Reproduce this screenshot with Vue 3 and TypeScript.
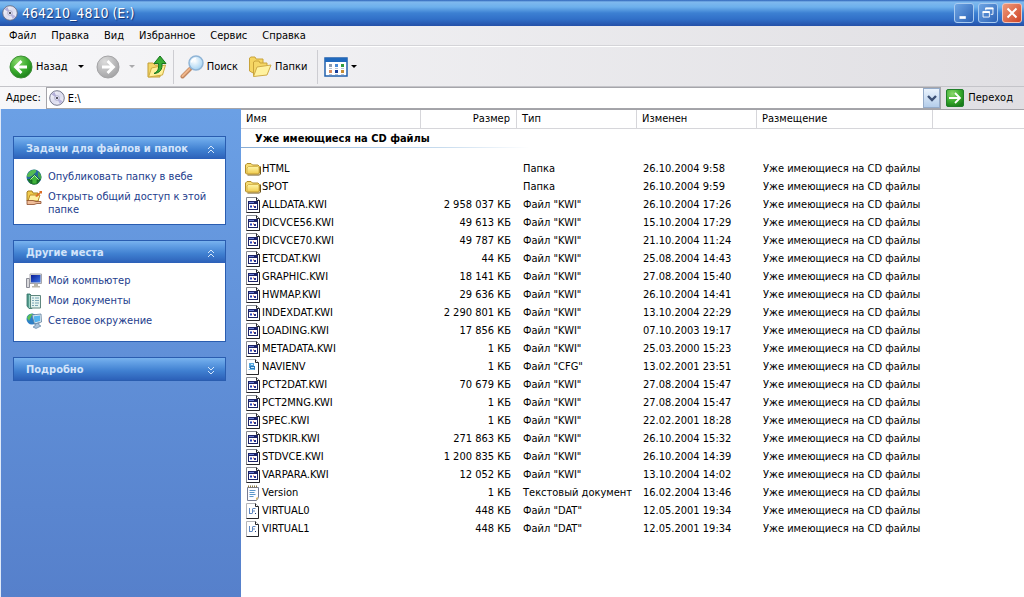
<script setup lang="ts">
import { ref } from 'vue'

type Icon = 'folder' | 'kwi' | 'cfg' | 'txt' | 'dat'

interface Entry {
  icon: Icon
  name: string
  size: string
  type: string
  modified: string
}

interface Place {
  icon: string
  label: string
}

interface Panel {
  id: string
  title: string
  open: boolean
  items: Place[]
}

const menus = ['Файл', 'Правка', 'Вид', 'Избранное', 'Сервис', 'Справка']
const address = ref('E:\\')
const location = 'Уже имеющиеся на CD файлы'

const panels = ref<Panel[]>([
  {
    id: 'tasks',
    title: 'Задачи для файлов и папок',
    open: true,
    items: [
      { icon: 'publish', label: 'Опубликовать папку в вебе' },
      { icon: 'share', label: 'Открыть общий доступ к этой папке' },
    ],
  },
  {
    id: 'places',
    title: 'Другие места',
    open: true,
    items: [
      { icon: 'computer', label: 'Мой компьютер' },
      { icon: 'documents', label: 'Мои документы' },
      { icon: 'network', label: 'Сетевое окружение' },
    ],
  },
  { id: 'details', title: 'Подробно', open: false, items: [] },
])

const kwi = (name: string, size: string, modified: string): Entry => ({
  icon: 'kwi',
  name: name + '.KWI',
  size: size + ' КБ',
  type: 'Файл "KWI"',
  modified,
})

const entries: Entry[] = [
  { icon: 'folder', name: 'HTML', size: '', type: 'Папка', modified: '26.10.2004 9:58' },
  { icon: 'folder', name: 'SPOT', size: '', type: 'Папка', modified: '26.10.2004 9:59' },
  kwi('ALLDATA', '2 958 037', '26.10.2004 17:26'),
  kwi('DICVCE56', '49 613', '15.10.2004 17:29'),
  kwi('DICVCE70', '49 787', '21.10.2004 11:24'),
  kwi('ETCDAT', '44', '25.08.2004 14:43'),
  kwi('GRAPHIC', '18 141', '27.08.2004 15:40'),
  kwi('HWMAP', '29 636', '26.10.2004 14:41'),
  kwi('INDEXDAT', '2 290 801', '13.10.2004 22:29'),
  kwi('LOADING', '17 856', '07.10.2003 19:17'),
  kwi('METADATA', '1', '25.03.2000 15:23'),
  { icon: 'cfg', name: 'NAVIENV', size: '1 КБ', type: 'Файл "CFG"', modified: '13.02.2001 23:51' },
  kwi('PCT2DAT', '70 679', '27.08.2004 15:47'),
  kwi('PCT2MNG', '1', '27.08.2004 15:47'),
  kwi('SPEC', '1', '22.02.2001 18:28'),
  kwi('STDKIR', '271 863', '26.10.2004 15:32'),
  kwi('STDVCE', '1 200 835', '26.10.2004 14:39'),
  kwi('VARPARA', '12 052', '13.10.2004 14:02'),
  { icon: 'txt', name: 'Version', size: '1 КБ', type: 'Текстовый документ', modified: '16.02.2004 13:46' },
  { icon: 'dat', name: 'VIRTUAL0', size: '448 КБ', type: 'Файл "DAT"', modified: '12.05.2001 19:34' },
  { icon: 'dat', name: 'VIRTUAL1', size: '448 КБ', type: 'Файл "DAT"', modified: '12.05.2001 19:34' },
]
</script>

<template>
  <div class="window">
    <svg class="defs" width="0" height="0" aria-hidden="true">
      <defs>
        <linearGradient id="g-folder" x1="0" y1="0" x2="0" y2="1">
          <stop offset="0" stop-color="#fff6a8" /><stop offset="1" stop-color="#f0cc50" />
        </linearGradient>
        <radialGradient id="g-green" cx=".35" cy=".25" r=".8">
          <stop offset="0" stop-color="#8ad86c" /><stop offset=".6" stop-color="#37a92c" /><stop offset="1" stop-color="#1b7c1a" />
        </radialGradient>
        <radialGradient id="g-grey" cx=".35" cy=".25" r=".8">
          <stop offset="0" stop-color="#dcdcdc" /><stop offset="1" stop-color="#a2a2a4" />
        </radialGradient>
        <linearGradient id="g-disc" x1="0" y1="0" x2="1" y2="1">
          <stop offset="0" stop-color="#ffffff" /><stop offset=".5" stop-color="#dcdcee" /><stop offset="1" stop-color="#f4f4fb" />
        </linearGradient>
        <radialGradient id="g-lens" cx=".4" cy=".35" r=".7">
          <stop offset="0" stop-color="#ffffff" /><stop offset="1" stop-color="#9fd0f2" />
        </radialGradient>
        <linearGradient id="g-screen" x1="0" y1="0" x2="1" y2="1">
          <stop offset="0" stop-color="#0a1c96" /><stop offset="1" stop-color="#3c78e8" />
        </linearGradient>
      </defs>
      <symbol id="i-disc" viewBox="0 0 16 16">
        <circle cx="8" cy="8" r="7.3" fill="url(#g-disc)" stroke="#666a80" stroke-width=".9" />
        <path d="M8 8 2.500 4.500A6.500 6.500 0 0 1 5.500 2z" fill="#b3afd8" />
        <path d="m8 8 5.700 3.200a6.500 6.500 0 0 1-3 2.700z" fill="#b9b5de" />
        <circle cx="8" cy="8" r="2.300" fill="#eef" stroke="#8d8db0" stroke-width=".6" />
        <circle cx="8" cy="8" r="1.100" fill="#30303c" />
      </symbol>
      <symbol id="i-folder" viewBox="0 0 16 16">
        <path d="M2.500 14h12l1-1V5.500" fill="none" stroke="#6e5518" />
        <path d="M.5 12V4L2 2.500h4L7.500 4h5.500l1.500 1.500V12l-1 1H1.500z" fill="#f6dc72" stroke="#b28d2a" />
        <path d="M2 12.800V7l1.500-1.500h9L14 6.500v5.500l-1 .8z" fill="url(#g-folder)" stroke="#c7a238" stroke-width=".7" />
      </symbol>
      <symbol id="i-kwi" viewBox="0 0 16 16">
        <path d="M1.500.5h10l3 3v12h-13z" fill="#fff" stroke="#85888f" />
        <path d="M11.500.5v3h3v12h-13" fill="none" stroke="#26262a" />
        <path d="M3 4h10v9H3z" fill="#1b2266" />
        <path d="M4 7h8v5H4z" fill="#fff" />
        <path d="M4 5.500h5" stroke="#6d80d4" />
        <path d="M5 8.500h2v2H5z" fill="#2740b8" /><path d="M8 8.500h1v1H8z" fill="#c63024" /><path d="M9 9h2v2H9z" fill="#27338c" />
      </symbol>
      <symbol id="i-cfg" viewBox="0 0 16 16">
        <path d="M1.500.5h9l3 3v12h-12z" fill="#fff" stroke="#b3b5ba" />
        <path d="M10.500.5v3h3v12h-12" fill="none" stroke="#26262a" />
        <path d="M4 4h5v5H4z" fill="#58a6dc" /><path d="M5 7h5v4H5z" fill="#2b79bd" /><path d="M3.500 10.500h6" stroke="#79bde8" />
        <path d="M6 5.500h2M6 8.500h3" stroke="#cdebfc" />
      </symbol>
      <symbol id="i-txt" viewBox="0 0 16 16">
        <path d="M2.500 2.500h11v10l-2 3h-9z" fill="#fcfcff" stroke="#777c92" />
        <path d="M3 1.500h10" stroke="#8c7a42" stroke-width="2" stroke-dasharray="1 1" />
        <path d="M4.500 5.500h6M4.500 7.500h5M4.500 9.500h6M4.500 11.500h4" stroke="#5a97ca" />
        <path d="M13 12v1l-2 2.500V13z" fill="#e0b95b" />
      </symbol>
      <symbol id="i-dat" viewBox="0 0 16 16">
        <path d="M1.500.5h9l3 3v12h-12z" fill="#fff" stroke="#b3b5ba" />
        <path d="M10.500.5v3h3v12h-12" fill="none" stroke="#26262a" />
        <path d="M4.500 5v6M4 10.500h3M7.500 5.500h3M7.500 6v4.500M7 8h3" stroke="#5e86c0" fill="none" />
        <path d="M10 10.500h1" stroke="#1f3f80" />
      </symbol>
      <symbol id="i-publish" viewBox="0 0 16 16">
        <circle cx="8" cy="8" r="7.500" fill="#266a9e" />
        <path d="M2 4.500C4 1 8 .5 10 1c1 2-1 3-2 4S5 8 2 8C0 7 1 6 2 4.500z" fill="#54bb53" />
        <path d="M12 2.500c3 2 4 5 3 8l-3-3z" fill="#45a548" />
        <path d="M1 10h14l-3 4.500-4 1-4-1z" fill="#1d7a2c" />
        <path d="m8.500 5.500 5.500 5.500h-3v4H6v-4H3z" fill="#3fb33a" stroke="#0e561c" stroke-width=".6" />
        <path d="M4.500 10.500 8.500 6.500l4 4" fill="none" stroke="#b8efae" />
      </symbol>
      <symbol id="i-share" viewBox="0 0 16 16">
        <path d="M1 12V3l1-1h4l1 2h5v8z" fill="#f1cb4c" stroke="#a57e22" />
        <path d="m2 12 2-6h10l-2 6z" fill="#fff1a2" stroke="#b98d2b" />
        <path d="m9 7 5-4-1-1h3v3l-1-1-4 4z" fill="#dc6e26" />
        <path d="M1 11.500h6l3 1h5v2h-4l-3 1H1z" fill="#efbd98" stroke="#8b4c2b" stroke-width=".8" />
      </symbol>
      <symbol id="i-computer" viewBox="0 0 16 16">
        <path d="M.5 5.500h3v9h-3z" fill="#d9d9dc" stroke="#8b8c96" />
        <path d="M4 1h11.500v9.500H4z" fill="#e4e4df" stroke="#a5a5ac" />
        <path d="M5 2h9.500v7.500H5z" fill="url(#g-screen)" />
        <path d="M8 11h4v2h2v1.500H6V13h2z" fill="#b9b6aa" />
      </symbol>
      <symbol id="i-documents" viewBox="0 0 16 16">
        <path d="M1 1h3l2 2v12.500H3L1 13z" fill="#569c8e" stroke="#2f7065" stroke-width=".8" />
        <path d="M4.500 2.500h10v12.500h-10z" fill="#e4f3ef" stroke="#60877f" />
        <path d="M6 5h2M9 5h4M6 7.500h2M9 7.500h4M6 10h2M9 10h4M6 12.500h2M9 12.500h3" stroke="#7ba5b5" />
        <path d="M3.500 2v13" stroke="#96d2c5" />
      </symbol>
      <symbol id="i-network" viewBox="0 0 16 16">
        <circle cx="6" cy="6" r="5.500" fill="#2c7fc7" />
        <path d="M1 5C2 2 4 .5 7 .7L5 4 3 8z" fill="#5cc157" />
        <path d="m6 2 9-1 .5 8-7 2z" fill="#e3edf4" stroke="#5d7d9c" stroke-width=".8" />
        <path d="m7.500 3.300 6.500-.8.200 5.500-5.500 1.500z" fill="#55b4ee" />
        <path d="m9 11 4-1v2l2 1-5 2.500-3-1.500 2-1z" fill="#a9c3db" stroke="#53779b" stroke-width=".6" />
      </symbol>
      <symbol id="i-back" viewBox="0 0 24 24">
        <circle cx="12" cy="12" r="11" fill="url(#g-green)" stroke="#3d8f36" />
        <path d="M12.500 6 6.500 12l6 6M7 12h11" fill="none" stroke="#fff" stroke-width="2.800" />
      </symbol>
      <symbol id="i-forward" viewBox="0 0 24 24">
        <circle cx="12" cy="12" r="11" fill="url(#g-grey)" stroke="#a4a4a6" />
        <path d="m11.500 6 6 6-6 6M17 12H6" fill="none" stroke="#fff" stroke-width="2.800" />
      </symbol>
      <symbol id="i-up" viewBox="0 0 20 24">
        <path d="M1 8h5l2 2h5v12H1z" fill="#f3d668" stroke="#c29d34" />
        <path d="m1.500 22 3-9L18.500 10l-3 10z" fill="#fff09a" stroke="#cfab40" />
        <path d="M7 18.500c4-2 5-5 4.500-10H7L13 1l6 7.500h-4c.5 6-2 9.500-8 10z" fill="#38ad35" stroke="#16731b" />
      </symbol>
      <symbol id="i-search" viewBox="0 0 24 24">
        <path d="m2.500 21.500 7.500-7.500" stroke="#c08660" stroke-width="4" stroke-linecap="round" />
        <path d="m2.500 21 7-7" stroke="#f0b68a" stroke-width="2" stroke-linecap="round" />
        <circle cx="16" cy="8" r="7" fill="url(#g-lens)" stroke="#8fb4d6" stroke-width="1.500" />
        <path d="M11.500 7.500A5 5 0 0 1 16 3.500" fill="none" stroke="#fff" stroke-width="1.500" />
      </symbol>
      <symbol id="i-folders" viewBox="0 0 24 24">
        <path d="M1.500 16V3L3 2h4l1 2h7v11l-8 4z" fill="#f5d562" stroke="#c9a33a" />
        <path d="M5.500 21V7L7 6h4l1 2h7v11z" fill="#f5d767" stroke="#c9a33a" />
        <path d="M5.500 21.500 9 12l14-2-4 10z" fill="#fff2a0" stroke="#cfab48" />
      </symbol>
      <symbol id="i-views" viewBox="0 0 24 20">
        <path d="M1 1h22v18H1z" fill="#fff" stroke="#2160ad" stroke-width="1.500" />
        <path d="M1 1h22v4H1z" fill="#2069bd" />
        <path d="M5 7h3v3H5z" fill="#8c9bb0" /><path d="M11 7h3v3h-3z" fill="#4b8bd6" /><path d="M17 7h3v3h-3z" fill="#309a3c" />
        <path d="M5 13h3v3H5z" fill="#da8a5e" /><path d="M11 13h3v3h-3z" fill="#193f9a" /><path d="M17 13h3v3h-3z" fill="#c58c35" />
        <path d="M5 11.500h3m3 0h3m3 0h3M5 17.500h3m3 0h3m3 0h3" stroke="#a5b4ca" stroke-width=".8" />
      </symbol>
    </svg>

    <header class="titlebar">
      <svg class="i16"><use href="#i-disc" /></svg>
      <h1>464210_4810 (E:)</h1>
      <button class="ctl" type="button" aria-label="Свернуть">
        <svg viewBox="0 0 20 20"><path d="M5 15h7" stroke="#fff" stroke-width="3" /></svg>
      </button>
      <button class="ctl" type="button" aria-label="Восстановить">
        <svg viewBox="0 0 20 20" fill="none" stroke="#fff">
          <path d="M7.500 7V4.500h8v7H13" /><path d="M7 5h9" stroke-width="2" />
          <path d="M4.500 8.500h7v6h-7z" /><path d="M4 9h8" stroke-width="2" />
        </svg>
      </button>
      <button class="ctl close" type="button" aria-label="Закрыть">
        <svg viewBox="0 0 20 20"><path d="m5 5 10 10M15 5 5 15" stroke="#fff" stroke-width="2.200" /></svg>
      </button>
    </header>

    <nav class="menubar">
      <button v-for="m in menus" :key="m" type="button">{{ m }}</button>
    </nav>

    <div class="toolbar">
      <button class="tool" type="button"><svg class="i24"><use href="#i-back" /></svg>Назад</button>
      <button class="drop" type="button" aria-label="Журнал назад"><i class="tri"></i></button>
      <button class="tool fwd" type="button" disabled aria-label="Вперёд"><svg class="i24"><use href="#i-forward" /></svg></button>
      <button class="drop fwd-drop" type="button" disabled aria-label="Журнал вперёд"><i class="tri"></i></button>
      <button class="tool up" type="button" aria-label="Вверх"><svg class="iup"><use href="#i-up" /></svg></button>
      <span class="sep"></span>
      <button class="tool" type="button"><svg class="i24"><use href="#i-search" /></svg>Поиск</button>
      <button class="tool folders" type="button"><svg class="i24"><use href="#i-folders" /></svg>Папки</button>
      <span class="sep last"></span>
      <button class="tool" type="button" aria-label="Вид"><svg class="iviews"><use href="#i-views" /></svg><i class="tri"></i></button>
    </div>

    <form class="address" @submit.prevent>
      <label for="addr">Адрес:</label>
      <div class="combo">
        <svg class="i16"><use href="#i-disc" /></svg>
        <input id="addr" v-model="address" type="text" spellcheck="false" autocomplete="off" />
        <button class="arrow" type="button" aria-label="Список адресов">
          <svg viewBox="0 0 10 8"><path d="m1 2 4 4 4-4" fill="none" stroke="#3c5075" stroke-width="2.400" /></svg>
        </button>
      </div>
      <button class="go" type="submit">
        <svg viewBox="0 0 18 18">
          <rect x=".5" y=".5" width="17" height="17" rx="1.500" fill="url(#g-green)" stroke="#21802a" />
          <path d="m9 4 5 5-5 5M13 9H3" fill="none" stroke="#fff" stroke-width="1.800" />
        </svg>Переход
      </button>
    </form>

    <div class="content">
      <aside class="sidebar">
        <section v-for="p in panels" :key="p.id" class="panel">
          <h2>
            <button type="button" :aria-expanded="p.open" @click="p.open = !p.open">
              {{ p.title }}
              <svg viewBox="0 0 8 9" fill="none" stroke="#d5e6fb">
                <path :d="p.open ? 'm1 4 3-3 3 3M1 8l3-3 3 3' : 'm1 1 3 3 3-3M1 5l3 3 3-3'" />
              </svg>
            </button>
          </h2>
          <ul v-if="p.open && p.items.length" :class="p.id">
            <li v-for="i in p.items" :key="i.label">
              <svg class="i16"><use :href="'#i-' + i.icon" /></svg>
              <a href="#">{{ i.label }}</a>
            </li>
          </ul>
        </section>
      </aside>

      <main class="files">
        <table>
          <colgroup>
            <col class="c-name" /><col class="c-size" /><col class="c-date" /><col class="c-date" /><col class="c-place" /><col />
          </colgroup>
          <thead>
            <tr>
              <th scope="col">Имя</th>
              <th scope="col" class="num">Размер</th>
              <th scope="col">Тип</th>
              <th scope="col">Изменен</th>
              <th scope="col">Размещение</th>
              <td></td>
            </tr>
          </thead>
          <tbody>
            <tr class="group">
              <th colspan="6" scope="rowgroup"><span>{{ location }}</span></th>
            </tr>
            <tr v-for="e in entries" :key="e.name">
              <td class="name"><div><svg class="i16"><use :href="'#i-' + e.icon" /></svg>{{ e.name }}</div></td>
              <td class="num">{{ e.size }}</td>
              <td>{{ e.type }}</td>
              <td>{{ e.modified }}</td>
              <td>{{ location }}</td>
              <td></td>
            </tr>
          </tbody>
        </table>
      </main>
    </div>
  </div>
</template>

<style>
body {
  margin: 0;
}
</style>

<style scoped>
.window {
  display: flex;
  flex-direction: column;
  min-height: 100vh;
  background: #fff;
  color: #000;
  font: 11px/14px "DejaVu Sans Condensed", "Noto Sans", sans-serif;
}
.window * {
  box-sizing: border-box;
}
.defs {
  position: absolute;
}
button {
  padding: 0;
  border: 0;
  background: none;
  color: inherit;
  font: inherit;
  white-space: nowrap;
}
svg {
  flex: none;
}
.i16 {
  width: 16px;
  height: 16px;
}
.i24 {
  width: 24px;
  height: 24px;
}

.titlebar {
  display: flex;
  align-items: center;
  gap: 4px;
  height: 26px;
  padding: 0 2px;
  background: linear-gradient(#2c62b8 0, #7fb9ee 2px, #6db0ec 7px, #3c80d2 13px, #3170c8 19px, #2450a8 26px);
}
.titlebar h1 {
  flex: 1;
  margin: 0;
  color: #fff;
  font: 14px/20px "DejaVu Sans Condensed", "Noto Sans", sans-serif;
  text-shadow: 1px 1px 1px #12306f;
}
.ctl {
  display: grid;
  width: 20px;
  height: 20px;
  border: 1px solid #a9cbf0;
  border-radius: 3px;
  background: linear-gradient(135deg, #6ea5e4, #2b62b6);
}
.close {
  border-color: #f0c4bc;
  background: linear-gradient(135deg, #ee9a7a, #cf4426);
}

.menubar {
  display: flex;
  gap: 15px;
  height: 20px;
  padding: 1px 9px 0;
  background: linear-gradient(90deg, #f7f7f9, #e0dfe3);
  border-bottom: 1px solid #d4d4d8;
}

.toolbar {
  display: flex;
  align-items: center;
  height: 41px;
  padding: 0 9px;
  background: linear-gradient(90deg, #f7f7f9, #e0dfe3);
  border-top: 1px solid #fff;
  border-bottom: 1px solid #c4c4c9;
}
.tool {
  display: flex;
  align-items: center;
  gap: 3px;
}
.drop {
  margin-left: 10px;
}
.tri {
  display: block;
  border: 3px solid transparent;
  border-top-color: #000;
  border-bottom: 0;
}
.fwd {
  margin-left: 12px;
}
.fwd-drop {
  margin-left: 9px;
  opacity: .3;
}
.up {
  margin-left: 12px;
}
.iup {
  width: 20px;
  height: 24px;
}
.sep {
  width: 1px;
  height: 34px;
  margin: 0 6px;
  background: #cdcdd2;
}
.last {
  margin-left: 10px;
}
.folders {
  margin-left: 10px;
}
.iviews {
  width: 24px;
  height: 20px;
}

.address {
  display: flex;
  align-items: center;
  gap: 5px;
  height: 22px;
  padding: 0 11px 0 6px;
  background: linear-gradient(90deg, #f7f7f9, #e0dfe3);
}
.combo {
  display: flex;
  flex: 1;
  align-items: center;
  height: 22px;
  padding-left: 2px;
  border: 1px solid #a5a5aa;
  background: #fff;
}
.combo input {
  flex: 1;
  min-width: 0;
  padding: 2px 3px 0;
  border: 0;
  outline: 0;
  background: none;
  font: inherit;
}
.arrow {
  display: grid;
  place-items: center;
  width: 17px;
  height: 20px;
  border: 1px solid #95abc9;
  background: linear-gradient(#eaf3fd, #b4cdea);
}
.arrow svg {
  width: 10px;
  height: 8px;
}
.go {
  display: flex;
  align-items: center;
  gap: 4px;
}
.go svg {
  width: 18px;
  height: 18px;
}

.content {
  display: flex;
  flex: 1;
}
.sidebar {
  display: flex;
  flex: none;
  flex-direction: column;
  gap: 15px;
  width: 241px;
  padding: 27px 15px 15px 12px;
  background: linear-gradient(#6ba0e5, #5680cb);
  border-left: 1px solid #dfe9f8;
}
.panel {
  border: 1px solid #2a5db0;
  background: #fff;
}
.panel h2 {
  margin: 0;
  font: inherit;
}
.panel h2 button {
  display: flex;
  align-items: center;
  justify-content: space-between;
  width: 100%;
  height: 22px;
  padding: 2px 10px 0 12px;
  background: linear-gradient(#79b3ee 0, #65a2e6 4px, #3f7fd0 13px, #2c60b8 22px);
  color: #d3e4fa;
  font-weight: bold;
}
.panel h2 svg {
  width: 8px;
  height: 9px;
}
.panel ul {
  margin: 0;
  padding: 10px 10px 8px 12px;
  list-style: none;
}
.panel li {
  display: flex;
  gap: 6px;
  min-height: 20px;
}
.panel .tasks li {
  line-height: 13px;
}
.panel a {
  margin-top: 1px;
  color: #1c3c8c;
  text-decoration: none;
}

.files {
  flex: 1;
  min-width: 0;
  border-top: 1px solid #a3a3a8;
}
table {
  width: 100%;
  border-collapse: separate;
  border-spacing: 0;
  table-layout: fixed;
}
.c-name {
  width: 180px;
}
.c-size {
  width: 96px;
}
.c-date {
  width: 120px;
}
.c-place {
  width: 176px;
}
th,
td {
  height: 18px;
  padding: 0 6px;
  font-weight: normal;
  text-align: left;
  white-space: nowrap;
}
thead th,
thead td {
  height: 19px;
  padding-left: 5px;
  border-bottom: 1px solid #d6d6da;
}
thead th {
  border-right: 1px solid #d6d6da;
}
th.num,
td.num {
  text-align: right;
}
.group th {
  height: 31px;
  padding: 0 0 12px;
  font-weight: bold;
}
.group span {
  display: block;
  width: 288px;
  height: 19px;
  padding: 3px 0 0 14px;
  border-bottom: 1px solid;
  border-image: linear-gradient(90deg, #88acd4, #c8dcee 70%, #fff) 1;
}
.name {
  padding: 0 0 0 4px;
}
.name div {
  display: flex;
  align-items: center;
  gap: 1px;
}
</style>
